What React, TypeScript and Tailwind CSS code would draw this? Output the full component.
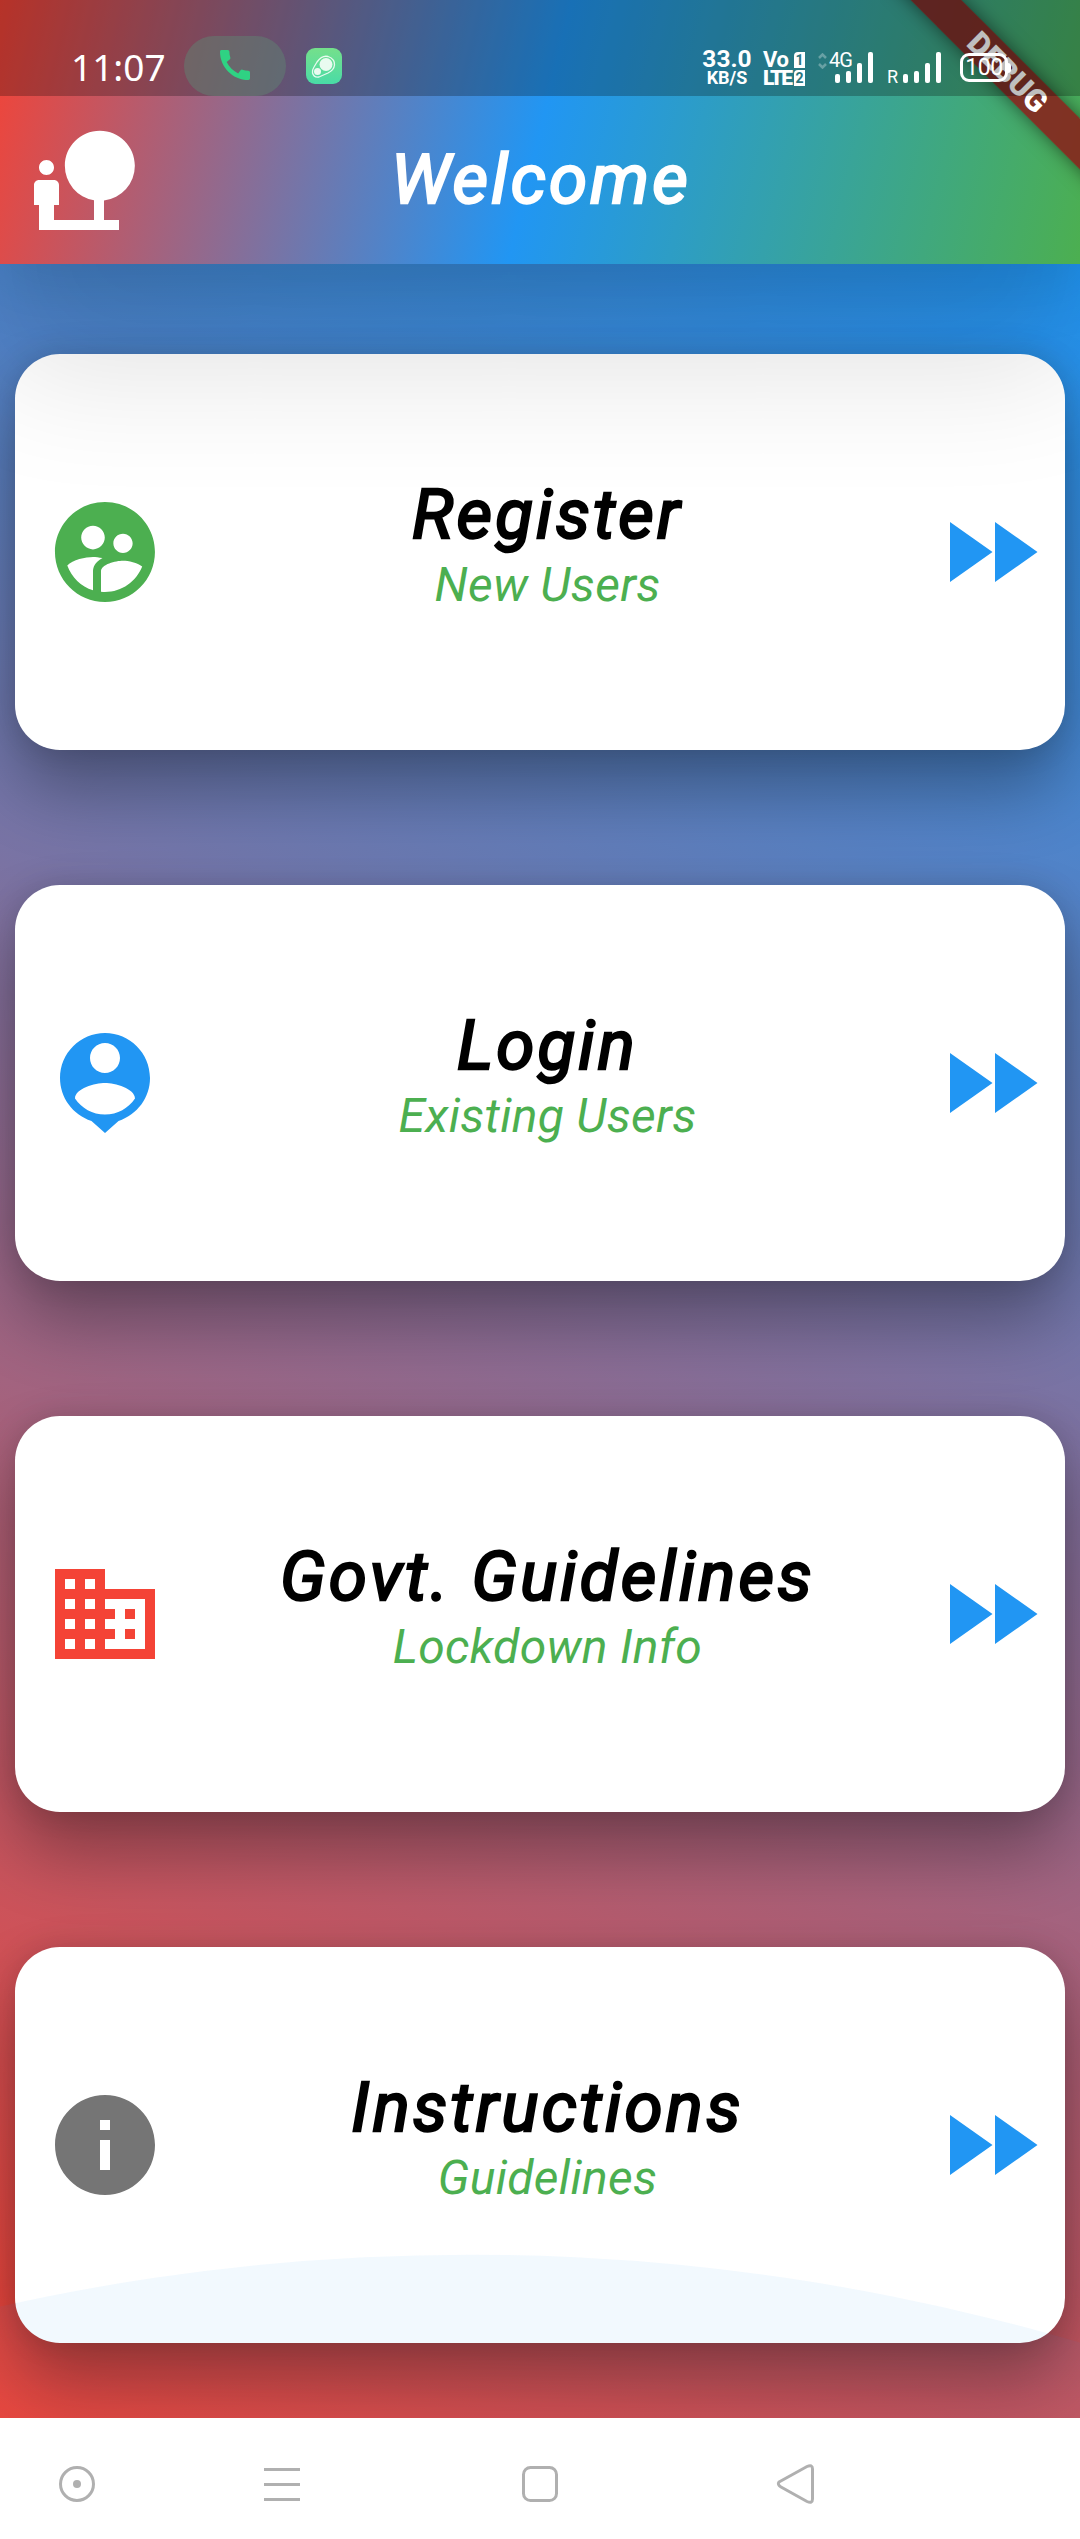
import React from "react";
import {
  MdSupervisedUserCircle,
  MdBusiness,
  MdInfo,
  MdFastForward,
  MdNaturePeople,
  MdCall,
} from "react-icons/md";

type Item = {
  title: string;
  subtitle: string;
  icon: React.ReactNode;
};

const PersonPin = () => (
  <svg viewBox="0 0 24 24" className="size-[120px] fill-[#2196f3]">
    <path d="M12 2C7.03 2 3 6.03 3 11c0 3.87 2.46 7.3 6.3 8.6L12 22l2.7-2.4C18.5 18.3 21 14.9 21 11c0-4.97-4.03-9-9-9zm0 2c1.66 0 3 1.34 3 3s-1.34 3-3 3-3-1.34-3-3 1.34-3 3-3zm0 14.3c-2.5 0-4.71-1.28-6-3.22.03-1.99 4-3.08 6-3.08 1.99 0 5.97 1.09 6 3.08-1.29 1.94-3.5 3.22-6 3.22z" />
  </svg>
);

const items: Item[] = [
  {
    title: "Register",
    subtitle: "New Users",
    icon: <MdSupervisedUserCircle className="size-[120px] text-[#4caf50]" />,
  },
  { title: "Login", subtitle: "Existing Users", icon: <PersonPin /> },
  {
    title: "Govt. Guidelines",
    subtitle: "Lockdown Info",
    icon: <MdBusiness className="size-[120px] text-[#f44336]" />,
  },
  {
    title: "Instructions",
    subtitle: "Guidelines",
    icon: <MdInfo className="size-[120px] text-[#757575]" />,
  },
];

function Bars() {
  return (
    <div className="flex h-[31px] items-end gap-[6px]">
      <span className="h-[9px] w-[5px] rounded-[2px] bg-white" />
      <span className="h-[12px] w-[5px] rounded-[2px] bg-white" />
      <span className="h-[20px] w-[5px] rounded-[2px] bg-white" />
      <span className="h-[31px] w-[5px] rounded-[2px] bg-white" />
    </div>
  );
}

function StatusBar() {
  return (
    <div className="relative h-[96px] bg-black/25 text-white">
      <div className="flex items-start pl-[71px] pt-[36px]">
        <span className="w-[113px] pt-[7px] font-['Noto_Sans'] text-[37px] leading-[48px]">11:07</span>
        <div className="flex h-[60px] w-[102px] items-center justify-center rounded-full bg-[#5f8272]/50">
          <MdCall className="mb-[2px] size-[40px] text-[#2fd283]" />
        </div>
        <div className="ml-[20px] mt-[12px] size-[36px] rounded-[9px] bg-linear-to-b from-[#74e08b] to-[#48dba6]">
          <svg viewBox="0 0 36 36" className="size-9">
            <path d="M11 14 Q16 7 22 8.5 Q29 11 28.500 17 Q28 22 22 25 L13 29 Q8 30 6.500 25 Q6 22 8 19 Z" fill="none" stroke="#fff" strokeWidth="1.300" opacity=".85" />
            <circle cx="20" cy="16.500" r="6.500" fill="#e9fbf0" />
            <circle cx="11.500" cy="23.500" r="3.500" fill="#e9fbf0" />
          </svg>
        </div>
        <div className="ml-[359px] mt-[13px] flex w-[52px] flex-col items-center font-['Roboto'] font-bold">
          <span className="text-[24.500px] leading-[20px]">33.0</span>
          <span className="text-[18px] leading-[17px]">KB/S</span>
        </div>
        <div className="ml-[10px] mt-[16px] grid w-[43px] grid-cols-[29px_12px] gap-x-[1px] gap-y-[2px] font-['Roboto'] font-bold">
          <span className="text-[22px] leading-[16px] tracking-[-0.5px]">Vo</span>
          <span className="ml-px h-[16px] w-[11px] rounded-tl-[4px] bg-white text-center text-[14px] leading-[16px] text-[#2a7580]">1</span>
          <span className="text-[21px] font-black leading-[16px] tracking-[-2.2px]">LTE</span>
          <span className="ml-px h-[16px] w-[11px] rounded-tl-[4px] bg-white text-center text-[14px] leading-[16px] text-[#2a7580]">2</span>
        </div>
        <svg viewBox="0 0 9 16" className="ml-[12px] mt-[17px] h-[16px] w-[9px] fill-none stroke-white/30 stroke-[2.500]">
          <path d="M1 5l3.500-3.500L8 5M1 11l3.500 3.500L8 11" />
        </svg>
        <span className="ml-[2px] mt-[14px] w-[6px] whitespace-nowrap font-['Roboto'] text-[20px] leading-[20px] tracking-[-1px]">4G</span>
        <div className="mt-[16px]"><Bars /></div>
        <span className="ml-[14px] mt-[32px] w-[16px] font-['Roboto'] text-[18px] leading-[17px]">R</span>
        <div className="mt-[16px]"><Bars /></div>
        <div className="ml-[19px] mt-[17px] h-[29px] w-[48px] rounded-[9px] border-[3px] border-white text-center font-['Roboto'] text-[23px] leading-[24px] tracking-[-0.5px]">
          100
        </div>
        <span className="mt-[27px] h-[10px] w-[3px] rounded-r-full bg-white" />
      </div>
    </div>
  );
}

function DebugBanner() {
  return (
    <div className="pointer-events-none absolute right-0 top-0 size-[200px] overflow-hidden">
      <div className="absolute left-[-42px] top-[54px] flex h-[36px] w-[340px] rotate-45 items-center justify-center bg-[rgba(141,22,22,0.815)] font-['Roboto'] text-[31px] font-black leading-none text-white shadow-[0_0_18px_rgba(0,0,0,0.5)]">
        DEBUG
      </div>
    </div>
  );
}

function AppBar() {
  return (
    <header className="relative z-10 h-[264px] bg-[linear-gradient(103.74deg,#f44336,#2196f3_50%,#4caf50)] shadow-[0_111px_130px_rgba(0,0,0,0.11),0_20px_60px_rgba(0,0,0,0.12)]">
      <DebugBanner />
      <StatusBar />
      <div className="flex h-[168px] items-center pl-6">
        <MdNaturePeople className="size-[120px] text-white" />
        <h1 className="w-[794px] text-center text-[69px] italic tracking-[3.2px] text-white [-webkit-text-stroke:2.400px_white]">Welcome</h1>
      </div>
    </header>
  );
}

function Card({ item }: { item: Item }) {
  return (
    <div className="flex h-[396px] items-center justify-between rounded-[45px] bg-white pl-[30px] pr-[15px] shadow-[0_40px_70px_rgba(0,0,0,0.33),0_0_30px_rgba(0,0,0,0.13)]">
      {item.icon}
      <div className="mb-[18px] text-center italic">
        <div className="pb-[2px] text-[69px] leading-[81px] tracking-[3.2px] text-black [-webkit-text-stroke:2.400px_black]">{item.title}</div>
        <div className="text-[48px] leading-[56px] tracking-[0.300px] text-[#4caf50]">{item.subtitle}</div>
      </div>
      <MdFastForward className="size-[120px] text-[#2196f3]" />
    </div>
  );
}

function NavBar() {
  return (
    <nav className="relative h-[121px] bg-white">
      <svg viewBox="0 0 1080 121" className="h-[121px] w-full fill-none stroke-[#b0b0b0] stroke-[3]">
        <circle cx="77" cy="66" r="16.500" />
        <circle cx="77" cy="66" r="4" className="fill-[#b0b0b0] stroke-none" />
        <path d="M264 51.500h36M264 66.500h36M264 81.500h36" />
        <rect x="523.500" y="49.500" width="33" height="33" rx="7" />
        <path d="M779 64 L807 48.500 Q812.500 46 812.500 51 V81 Q812.500 86 807 83.500 L781 69 Q777 66.500 779 64Z" />
      </svg>
    </nav>
  );
}

export default function App() {
  return (
    <div className="relative flex h-[2539px] w-[1080px] flex-col overflow-hidden bg-white font-['Roboto',sans-serif]">
      <AppBar />
      <main className="relative h-[2154px] overflow-hidden bg-[linear-gradient(26.63deg,#f44336,#2196f3)] px-[15px] pt-[90px]">
        <div className="flex flex-col gap-[135px]">
          {items.map((item) => (
            <Card key={item.title} item={item} />
          ))}
        </div>
        <svg viewBox="0 0 1080 164" className="absolute bottom-0 left-0 h-[164px] w-full fill-[#2196f3]/6">
          <circle cx="470" cy="2160.700" r="2160" />
        </svg>
      </main>
      <NavBar />
    </div>
  );
}
